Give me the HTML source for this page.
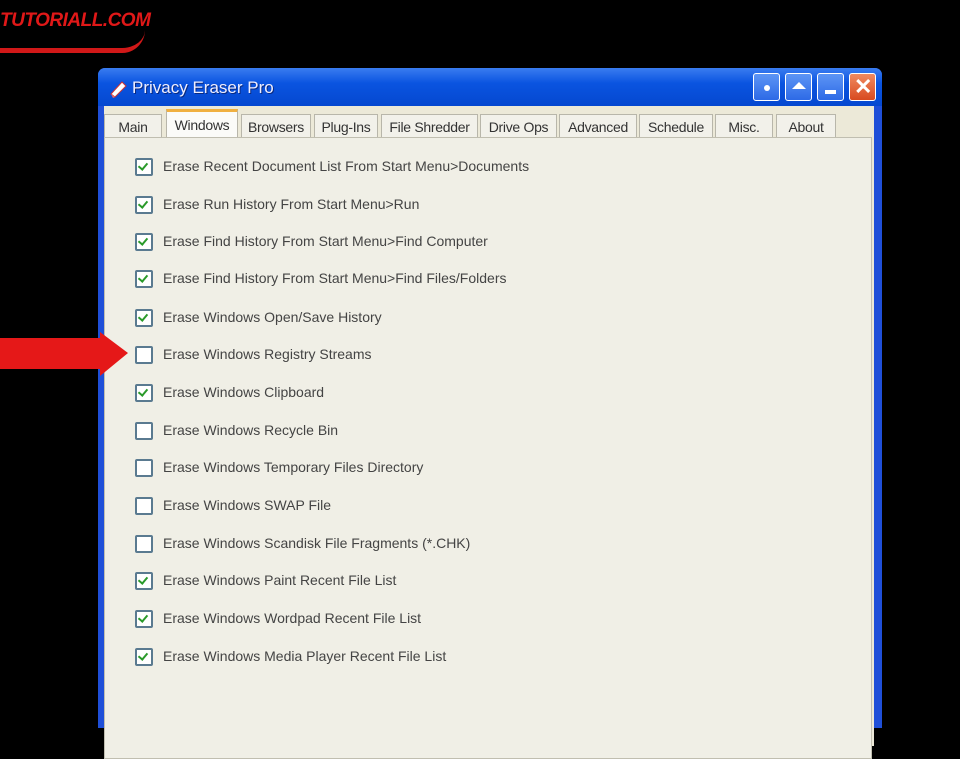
<!DOCTYPE html>
<html><head><style>
body{margin:0;width:960px;height:720px;background:#000;position:relative;overflow:hidden;font-family:"Liberation Sans",sans-serif}
.win{position:absolute;left:98px;top:68px;width:784px;height:660px;background:#1f4fd8;border-radius:7px 7px 0 0}
.title{position:absolute;left:0;top:0;width:784px;height:38px;border-radius:7px 7px 0 0;background:linear-gradient(#3a7cf0,#0a54e0 40%,#0548d0)}
.ttext{position:absolute;left:34px;top:10px;color:#eef;font-size:17px;text-shadow:1px 1px #0a2a80}
.body{position:absolute;left:6px;top:38px;width:770px;height:640px;background:#ece9d8}
.btn{position:absolute;top:5px;width:25px;height:26px;border:1px solid #fff;border-radius:3px;background:linear-gradient(#5d95f5,#2d6ae6)}
.tab{position:absolute;top:8px;height:24px;background:#f2f1ea;border:1px solid #b8b6aa;border-bottom:none;font-size:14px;color:#333;text-align:center;line-height:24px;letter-spacing:-0.3px}
.tab.sel{top:3px;height:30px;background:#fbfbf8;border-top:3px solid #f0b040;line-height:26px}
.panel{position:absolute;left:0;top:31px;width:766px;height:620px;background:#f0efe6;border:1px solid #c0beb0}
.item{position:absolute;left:30px;height:18px;font-size:14px;color:#444;letter-spacing:0}
.cb{position:absolute;left:0;top:0;width:14px;height:14px;border:2px solid #5a7a90;background:#fff;border-radius:2px}
.cb.c::after{content:"";position:absolute;left:3px;top:1px;width:4px;height:7px;border:solid #2a9a2a;border-width:0 2px 2px 0;transform:rotate(40deg)}
.lbl{position:absolute;left:28px;top:0;white-space:nowrap}
</style></head><body>
<div style="position:absolute;left:0;top:10px;color:#e01818;font-weight:bold;font-style:italic;font-size:19px;letter-spacing:-0.5px">TUTORIALL.COM</div>
<div style="position:absolute;left:-20px;top:30px;width:165px;height:18px;border-bottom:5px solid #d01818;border-radius:0 0 80px 40px"></div>
<div class="win">
<div class="title">
<svg style="position:absolute;left:10px;top:10px" width="20" height="20"><path d="M3 16 L14 4 L18 8 L7 19 Z" fill="#fff" stroke="#c33" stroke-width="1"/><path d="M3 16 L7 19 L5 20Z" fill="#e66"/></svg>
<div class="ttext">Privacy Eraser Pro</div>
<div class="btn" style="left:655px"><div style="position:absolute;left:10px;top:11px;width:6px;height:6px;background:#fff;border-radius:3px"></div></div>
<div class="btn" style="left:687px"><div style="position:absolute;left:6px;top:8px;width:0;height:0;border:7px solid transparent;border-bottom:7px solid #fff;border-top:none"></div></div>
<div class="btn" style="left:719px"><div style="position:absolute;left:7px;top:16px;width:11px;height:4px;background:#fff"></div></div>
<div class="btn" style="left:751px;background:linear-gradient(#f08a60,#d84a20)"><div style="position:absolute;left:4px;top:0;color:#fff;font-size:22px;font-weight:bold;line-height:26px">✕</div></div>
</div>
<div class="body">
<div class="tab" style="left:0;width:56px">Main</div>
<div class="tab sel" style="left:62px;width:70px">Windows</div>
<div class="tab" style="left:137px;width:68px">Browsers</div>
<div class="tab" style="left:210px;width:62px">Plug-Ins</div>
<div class="tab" style="left:277px;width:95px">File Shredder</div>
<div class="tab" style="left:376px;width:75px">Drive Ops</div>
<div class="tab" style="left:455px;width:76px">Advanced</div>
<div class="tab" style="left:535px;width:72px">Schedule</div>
<div class="tab" style="left:611px;width:56px">Misc.</div>
<div class="tab" style="left:672px;width:58px">About</div>
<div class="panel">
<div class="item" style="top:20px"><div class="cb c"></div><div class="lbl">Erase Recent Document List From Start Menu&gt;Documents</div></div>
<div class="item" style="top:58px"><div class="cb c"></div><div class="lbl">Erase Run History From Start Menu&gt;Run</div></div>
<div class="item" style="top:95px"><div class="cb c"></div><div class="lbl">Erase Find History From Start Menu&gt;Find Computer</div></div>
<div class="item" style="top:132px"><div class="cb c"></div><div class="lbl">Erase Find History From Start Menu&gt;Find Files/Folders</div></div>
<div class="item" style="top:171px"><div class="cb c"></div><div class="lbl">Erase Windows Open/Save History</div></div>
<div class="item" style="top:208px"><div class="cb"></div><div class="lbl">Erase Windows Registry Streams</div></div>
<div class="item" style="top:246px"><div class="cb c"></div><div class="lbl">Erase Windows Clipboard</div></div>
<div class="item" style="top:284px"><div class="cb"></div><div class="lbl">Erase Windows Recycle Bin</div></div>
<div class="item" style="top:321px"><div class="cb"></div><div class="lbl">Erase Windows Temporary Files Directory</div></div>
<div class="item" style="top:359px"><div class="cb"></div><div class="lbl">Erase Windows SWAP File</div></div>
<div class="item" style="top:397px"><div class="cb"></div><div class="lbl">Erase Windows Scandisk File Fragments (*.CHK)</div></div>
<div class="item" style="top:434px"><div class="cb c"></div><div class="lbl">Erase Windows Paint Recent File List</div></div>
<div class="item" style="top:472px"><div class="cb c"></div><div class="lbl">Erase Windows Wordpad Recent File List</div></div>
<div class="item" style="top:510px"><div class="cb c"></div><div class="lbl">Erase Windows Media Player Recent File List</div></div>
</div>
</div>
</div>
<svg style="position:absolute;left:0;top:330px" width="130" height="48"><path d="M0 8 H100 V2 L128 23 L100 46 V39 H0 Z" fill="#e51818"/></svg>
</body></html>
